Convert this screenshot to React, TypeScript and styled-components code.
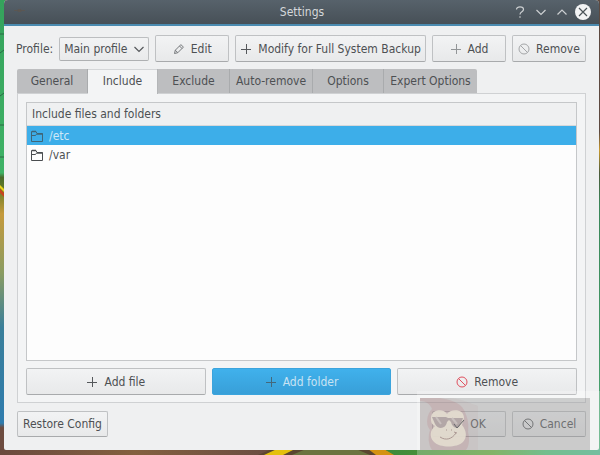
import React, { useState } from "react";
import styled, { createGlobalStyle, css } from "styled-components";

const GlobalStyle = createGlobalStyle`
  * { box-sizing: border-box; }
  body { margin: 0; }
  body, button, select, table {
    font-family: "DejaVu Sans Condensed", "DejaVu Sans", sans-serif;
    font-size: 12px;
    line-height: 16px;
    color: #4d5053;
  }
`;

const Desktop = styled.div`
  position: relative;
  display: flex;
  min-height: 100vh;
  padding: 0 1px 5px 4px;
  overflow: hidden;
  background: #73543f;
`;

const Wallpaper = styled.svg`
  position: absolute;
  inset: 0;
  width: 100%;
  height: 100%;
`;

const Window = styled.main`
  position: relative;
  flex: 1;
  min-width: 0;
  display: flex;
  flex-direction: column;
  border-radius: 4px 4px 2px 2px;
  background: #eff0f1;
`;

const TitleBar = styled.header`
  display: grid;
  grid-template-columns: 1fr auto 1fr;
  align-items: center;
  height: 26px;
  padding: 0 8px 0 9px;
  border-bottom: 2px solid #4b8bb0;
  border-radius: 4px 4px 0 0;
  background: linear-gradient(#57626b, #475057);
`;

const Title = styled.h1`
  margin: 0;
  font-size: 12px;
  font-weight: 400;
  color: #d5d8da;
`;

const WindowControls = styled.div`
  display: flex;
  justify-content: flex-end;
  gap: 5px;
`;

const WindowButton = styled.button`
  display: grid;
  place-items: center;
  width: 16px;
  height: 16px;
  padding: 0;
  border: 0;
  background: none;
`;

const Toolbar = styled.div`
  display: flex;
  align-items: center;
  gap: 6px;
  padding: 9px 13px 0 12px;
`;

const ProfileField = styled.label`
  display: flex;
  flex: none;
  align-items: center;
  gap: 6px;
`;

const SelectBox = styled.span`
  display: grid;
  align-items: center;
  > * { grid-area: 1 / 1; }
  > svg { justify-self: end; margin-right: 4px; pointer-events: none; }
`;

const Select = styled.select`
  appearance: none;
  width: 90px;
  height: 24px;
  padding: 0 4px;
  border: 1px solid #bcbec0;
  border-bottom-color: #aeb0b2;
  border-radius: 2px;
  background: linear-gradient(#f2f3f4, #e9eaeb);
`;

const Button = styled.button<{ $grow?: boolean; $primary?: boolean; $compact?: boolean }>`
  display: flex;
  align-items: center;
  justify-content: center;
  gap: 6px;
  height: 27px;
  min-width: 74px;
  padding: 0 5px;
  white-space: nowrap;
  border: 1px solid #bfc1c3;
  border-bottom-color: #a8aaac;
  border-radius: 2px;
  background: linear-gradient(#f2f3f4, #e8e9ea);
  ${(p) => p.$grow && css`flex: 1;`}
  ${(p) => p.$compact && css`height: 26px;`}
  ${(p) => p.$primary && css`
    color: #c8e3f3;
    border-color: #3ba4dd;
    background: linear-gradient(#40b1ec, #389fd8);
  `}
`;

const TabList = styled.div`
  display: flex;
  margin-bottom: -1px;
  padding: 7px 13px 0;
`;

const Tab = styled.button<{ $active: boolean; $width: number }>`
  width: ${(p) => p.$width}px;
  height: 24px;
  margin-bottom: 1px;
  padding: 0;
  white-space: nowrap;
  border: 0;
  border-right: 1px solid #a9abad;
  background: #bdbec0;
  &:first-child { border-radius: 2px 0 0 0; }
  &:last-child { border-radius: 0 2px 0 0; border-right: 0; }
  ${(p) => p.$active && css`
    position: relative;
    height: 25px;
    margin-bottom: 0;
    padding-bottom: 1px;
    border-right-color: #b4b6b8;
    background: #f3f4f5;
    box-shadow: inset 0 1px #d4d6d8;
  `}
`;

const Panel = styled.section`
  flex: 1;
  display: flex;
  flex-direction: column;
  gap: 7px;
  margin: 0 13px;
  padding: 8px 8px 7px;
  border: 1px solid #cfd1d3;
  background: #f3f4f5;
`;

const ListFrame = styled.div`
  flex: 1;
  border: 1px solid #c5c7c9;
  background: #fdfdfd;
`;

const FileTable = styled.table`
  width: 100%;
  border-spacing: 0;
`;

const HeaderCell = styled.th`
  height: 23px;
  padding: 0 5px;
  text-align: left;
  font-weight: 400;
  border-bottom: 1px solid #d6d8da;
  background: #eff0f1;
`;

const FileRow = styled.tr<{ $selected: boolean }>`
  height: 19px;
  color: ${(p) => (p.$selected ? "#cfe8f7" : "#4d5053")};
  background: ${(p) => (p.$selected ? "#3daee9" : "transparent")};
`;

const FileCell = styled.td`
  padding: 0 4px;
`;

const FileName = styled.span`
  display: flex;
  align-items: center;
  gap: 6px;
`;

const ButtonRow = styled.div`
  display: flex;
  gap: 6px;
`;

const Footer = styled.footer`
  display: flex;
  gap: 6px;
  padding: 8px 13px 13px;
`;

const Spacer = styled.span`
  flex: 1;
`;

const Watermark = styled.div`
  position: absolute;
  right: 0;
  bottom: 0;
  width: 183px;
  height: 64px;
  padding: 7px 10px 5px 3px;
  background: rgba(255, 255, 255, 0.25);
  pointer-events: none;
`;

const WatermarkPlate = styled.div`
  height: 52px;
  background: rgba(75, 75, 75, 0.24);
`;

const GlyphSvg = styled.svg`
  flex: none;
`;

const Icon = ({ children, color = "#55585b" }: { children: React.ReactNode; color?: string }) => (
  <GlyphSvg width="12" height="12" viewBox="0 0 12 12" fill="none" stroke={color} aria-hidden="true">
    {children}
  </GlyphSvg>
);

const Plus = ({ color }: { color?: string }) => <Icon color={color}><path d="M1 6.5h10M6.5 1v10" /></Icon>;
const Forbidden = ({ color }: { color?: string }) => (
  <Icon color={color}><circle cx="6" cy="6" r="5" /><path d="M2.5 2.5l7 7" /></Icon>
);
const Pencil = () => (
  <Icon color="#75787b"><path d="M1.500 10.500l.8-3.300 5.600-5.600 2.500 2.500-5.600 5.600zM6.500 3l2.500 2.500M2.300 7.200l2.500 2.500" /></Icon>
);
const Check = () => <Icon><path d="M1 6.500l3.200 3.200L11 2.500" strokeWidth="1.200" /></Icon>;
const ChevronDown = ({ color }: { color?: string }) => <Icon color={color}><path d="M1.500 4L6 8.500 10.500 4" strokeWidth="1.200" /></Icon>;
const Folder = ({ color }: { color: string }) => (
  <Icon color={color}>
    <path d="M.5 11.500V1.500h4.500l1 2h5.500v8zM.5 5.500h4l1.500-2" />
    <path d="M1 1.500h4M6 4h5.500" strokeWidth="1.500" />
  </Icon>
);

const tabs = [
  { name: "General", width: 71 },
  { name: "Include", width: 70 },
  { name: "Exclude", width: 72 },
  { name: "Auto-remove", width: 83 },
  { name: "Options", width: 71 },
  { name: "Expert Options", width: 93 },
];
const files = ["/etc", "/var"];

export default function App() {
  const [tab, setTab] = useState("Include");
  const [selected, setSelected] = useState("/etc");

  return (
    <>
      <GlobalStyle />
      <Desktop>
        <Wallpaper viewBox="0 0 600 455" preserveAspectRatio="none" aria-hidden="true">
          <defs>
            <linearGradient id="leftEdge" x2="0" y2="1">
              <stop offset="0" stopColor="#35a25c" />
              <stop offset=".38" stopColor="#3fb266" />
              <stop offset=".39" stopColor="#4a6b2c" />
              <stop offset=".41" stopColor="#5f7a26" />
              <stop offset=".47" stopColor="#c59a3c" />
              <stop offset=".6" stopColor="#8a9c62" />
              <stop offset=".72" stopColor="#3a7f9a" />
              <stop offset=".93" stopColor="#2f7cae" />
              <stop offset=".94" stopColor="#6d4c40" />
            </linearGradient>
            <linearGradient id="rightEdge" x2="0" y2="1">
              <stop offset="0" stopColor="#5d4940" />
              <stop offset=".29" stopColor="#5d4940" />
              <stop offset=".33" stopColor="#c99a2e" />
              <stop offset=".38" stopColor="#4b5a3a" />
              <stop offset=".45" stopColor="#3a8658" />
              <stop offset="1" stopColor="#4aa873" />
            </linearGradient>
            <linearGradient id="bottomLeft">
              <stop offset="0" stopColor="#6b4a3e" />
              <stop offset=".5" stopColor="#83603f" />
              <stop offset="1" stopColor="#6b4d42" />
            </linearGradient>
            <linearGradient id="bottomRight">
              <stop offset="0" stopColor="#3c8a3c" />
              <stop offset=".5" stopColor="#5a9a34" />
              <stop offset=".75" stopColor="#45a868" />
              <stop offset="1" stopColor="#45a880" />
            </linearGradient>
          </defs>
          <rect width="5" height="455" fill="url(#leftEdge)" />
          <path d="M0 185l5 5v3l-5-5z" fill="#ecd41c" />
          <path d="M0 189l5 5v4l-5-5z" fill="#c8451d" />
          <rect x="598" width="2" height="455" fill="url(#rightEdge)" />
          <rect y="449" width="270" height="6" fill="url(#bottomLeft)" />
          <path d="M258 455l14-6h110l18 6z" fill="#5b4630" />
          <path d="M264 455l13-6h18l-12 6z" fill="#e4c00c" />
          <path d="M292 455l14-6h50l14 6z" fill="#6c7440" />
          <path d="M376 455l-8-6h16l12 6z" fill="#d49212" />
          <path d="M394 455l-10-6h216v6z" fill="url(#bottomRight)" />
          <path d="M0 34h4M0 53l4-3M0 96l4-3M0 125h4M0 157h4" stroke="#2a6b45" />
        </Wallpaper>
        <Window>
          <TitleBar>
            <svg width="14" height="14" viewBox="0 0 14 14" aria-hidden="true">
              <path d="M1 5.500h11M5 4.500h3v2H5z" stroke="#5b5753" fill="#625a52" />
            </svg>
            <Title>Settings</Title>
            <WindowControls>
              <WindowButton aria-label="Help">
                <Icon color="#cdd0d2"><path d="M2.500 3.500C2.500 0 9.500 0 9.500 3.500C9.500 6 6 5.500 6 8.500M6 10.200v1.500" strokeWidth="1.200" /></Icon>
              </WindowButton>
              <WindowButton aria-label="Minimize"><ChevronDown color="#cdd0d2" /></WindowButton>
              <WindowButton aria-label="Maximize">
                <Icon color="#cdd0d2"><path d="M1.500 8.500L6 4l4.500 4.500" strokeWidth="1.200" /></Icon>
              </WindowButton>
              <WindowButton aria-label="Close">
                <svg width="16" height="16" viewBox="0 0 16 16" aria-hidden="true">
                  <circle cx="8" cy="8" r="8" fill="#f3f4f5" />
                  <path d="M4 4l8 8M12 4l-8 8" stroke="#4b5459" strokeWidth="1.200" />
                </svg>
              </WindowButton>
            </WindowControls>
          </TitleBar>
          <Toolbar>
            <ProfileField>
              Profile:
              <SelectBox>
                <Select defaultValue="Main profile"><option>Main profile</option></Select>
                <ChevronDown />
              </SelectBox>
            </ProfileField>
            <Button><Pencil />Edit</Button>
            <Button $grow><Plus />Modify for Full System Backup</Button>
            <Button><Plus color="#929597" />Add</Button>
            <Button><Forbidden color="#a4a6a8" />Remove</Button>
          </Toolbar>
          <TabList role="tablist">
            {tabs.map((t) => (
              <Tab key={t.name} role="tab" aria-selected={t.name === tab} $active={t.name === tab} $width={t.width} onClick={() => setTab(t.name)}>
                {t.name}
              </Tab>
            ))}
          </TabList>
          <Panel role="tabpanel" aria-label={tab}>
            <ListFrame>
              <FileTable>
                <thead><tr><HeaderCell>Include files and folders</HeaderCell></tr></thead>
                <tbody>
                  {files.map((f) => (
                    <FileRow key={f} $selected={f === selected} onClick={() => setSelected(f)}>
                      <FileCell>
                        <FileName><Folder color={f === selected ? "#3f6577" : "#4a4d50"} />{f}</FileName>
                      </FileCell>
                    </FileRow>
                  ))}
                </tbody>
              </FileTable>
            </ListFrame>
            <ButtonRow>
              <Button $grow><Plus />Add file</Button>
              <Button $grow $primary><Plus color="#44687b" />Add folder</Button>
              <Button $grow><Forbidden color="#e0505e" />Remove</Button>
            </ButtonRow>
          </Panel>
          <Footer>
            <Button $compact>Restore Config</Button>
            <Spacer />
            <Button $compact><Check />OK</Button>
            <Button $compact><Forbidden />Cancel</Button>
          </Footer>
        </Window>
        <Watermark aria-hidden="true">
          <WatermarkPlate>
            <svg width="60" height="52" viewBox="0 0 60 52">
              <path d="M0 0h30c12 1 20 5 28 8v44H0z" fill="#a85f63" fillOpacity=".06" />
              <path d="M0 0h20c10 2 20 4 24 12c4 8 5 14 4 22c2 8 1 14-2 18H12C8 46 8 38 10 32C5 26 7 16 12 11C10 6 6 3 0 3z" fill="#b0585e" fillOpacity=".15" />
              <path d="M11 20C11 11 24 10 27 16C30 11 44 10 44 20L42 27C47 33 47 40 43 44C37 50 20 50 14 44C9 39 10 32 15 28C11 26 11 23 11 20z" fill="#e3dccf" fillOpacity=".92" />
              <path d="M12 19h14l2 1h15l-1 3-3 6c-3 2-7 0-8-5l-2-2-2 2c-1 7-9 8-12 2z" fill="#b3a7a7" />
              <path d="M16 19l5 7M32 20l5 6" stroke="#c8bfbd" strokeWidth="2" />
              <path d="M20 39c6 4 12 2 16-4M34 34l3 1M26 32h1M31 32h1" stroke="#ab9893" fill="none" />
              <path d="M34 26l3 4 7-8" stroke="#66676a" fill="none" />
            </svg>
          </WatermarkPlate>
        </Watermark>
      </Desktop>
    </>
  );
}
